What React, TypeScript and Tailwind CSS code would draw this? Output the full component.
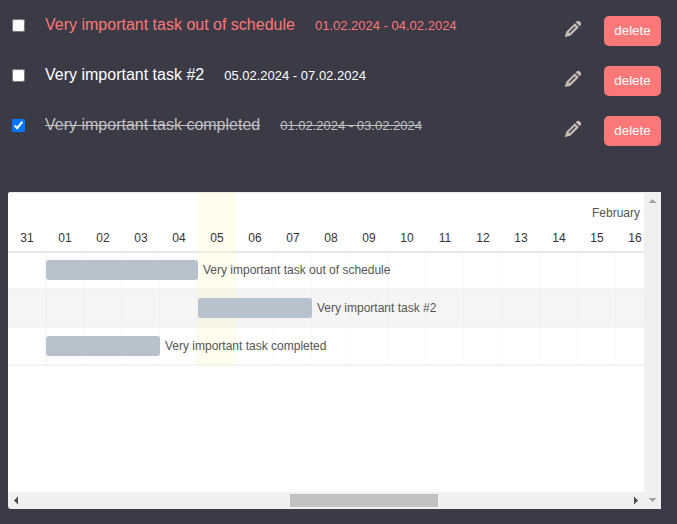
type Task = {
  title: string;
  dates: string;
  tone: string;
  done: boolean;
  start: number;
  days: number;
};

const tasks: Task[] = [
  { title: 'Very important task out of schedule', dates: '01.02.2024 - 04.02.2024', tone: 'text-[#fa7878]', done: false, start: 1, days: 4 },
  { title: 'Very important task #2', dates: '05.02.2024 - 07.02.2024', tone: 'text-white', done: false, start: 5, days: 3 },
  { title: 'Very important task completed', dates: '01.02.2024 - 03.02.2024', tone: 'text-[#c0c0c0] line-through', done: true, start: 1, days: 3 },
];

const days = ['31', '01', '02', '03', '04', '05', '06', '07', '08', '09', '10', '11', '12', '13', '14', '15', '16'];
const DAY = 38;

function Pencil() {
  return (
    <svg width="18" height="18" viewBox="0 0 18 18" fill="none">
      <path d="M0.8 17.1 L2.3 11.7 L10.8 3.2 L14.8 7.2 L6.3 15.7 Z" fill="#c8bdb4" />
      <path d="M5.2 12.8 L11.2 6.8" stroke="#3b3a47" strokeWidth="1.4" />
      <path d="M11.7 2.3 L12.9 1.3 Q14.3 0.2 15.7 1.4 L16.6 2.3 Q17.8 3.7 16.7 5.1 L15.7 6.3 Z" fill="#c8bdb4" />
    </svg>
  );
}

function TaskRow({ task }: { task: Task }) {
  return (
    <div className="flex h-[50px] items-start">
      <input type="checkbox" defaultChecked={task.done} className="mt-[9px] ml-1 size-[13px] shrink-0" />
      <div className={`ml-5 flex items-baseline gap-5 whitespace-nowrap ${task.tone}`}>
        <span className="pt-[3px] text-[16px] leading-6">{task.title}</span>
        <span className="text-[13px] leading-6">{task.dates}</span>
      </div>
      <button className="mt-[10px] ml-auto"><Pencil /></button>
      <button className="mt-[6px] ml-[22px] h-[30px] w-[57px] rounded-[5px] bg-[#fa7878] text-[13.333px] text-white">delete</button>
    </div>
  );
}

function Gantt() {
  return (
    <svg width="636" height="300" className="block" fontFamily="'Liberation Sans', Arial, sans-serif" fontSize="12">
      <rect width="636" height="300" fill="#fff" />
      <rect width="636" height="1" fill="#ececec" />
      <rect y="97" width="636" height="38" fill="#f5f5f5" />
      {[97, 135, 173].map((y) => (
        <rect key={y} y={y - 1} width="636" height="2" fill="#f3f4f4" />
      ))}
      <rect y="59" width="636" height="2" fill="#e8e8e8" />
      {days.slice(1).map((d, i) => (
        <rect key={d} x={(i + 1) * DAY - 1} y="61" width={i === 0 ? 2 : 1} height="112" fill="#e0e0e0" fillOpacity="0.22" />
      ))}
      <rect x="190" width="38" height="173" fill="#fcf8c3" fillOpacity="0.28" />
      <text x="608" y="25" textAnchor="middle" fill="#555">February</text>
      {days.map((d, i) => (
        <text key={d} x={19 + i * DAY} y="50" textAnchor="middle" fill="#333">{d}</text>
      ))}
      {tasks.map((t, i) => (
        <g key={t.title}>
          <rect x={t.start * DAY} y={68 + i * DAY} width={t.days * DAY} height="20" rx="3" fill="#b8c2cc" />
          <text x={(t.start + t.days) * DAY + 5} y={82 + i * DAY} fill="#555">{t.title}</text>
        </g>
      ))}
    </svg>
  );
}

export default function App() {
  return (
    <main className="h-[524px] w-[677px] overflow-hidden bg-[#3b3a47] px-2 pt-[10px] font-['Liberation_Sans',Arial,sans-serif]">
      <section className="h-[182px] w-[653px]">
        {tasks.map((t) => <TaskRow key={t.title} task={t} />)}
      </section>
      <section className="flex h-[317px] w-[653px] overflow-hidden rounded-l-[3px] bg-[#f0f0f0]">
        <div className="w-[636px]">
          <Gantt />
          <div className="flex h-[17px] items-center">
            <svg width="17" height="17" shapeRendering="crispEdges"><path d="M10 5 V12 L6 8.5 Z" fill="#505050" /></svg>
            <div className="ml-[265px] h-[13px] w-[148px] bg-[#c1c1c1]" />
            <svg className="ml-auto" width="17" height="17" shapeRendering="crispEdges"><path d="M7 5 V12 L11 8.5 Z" fill="#505050" /></svg>
          </div>
        </div>
        <div className="flex w-[17px] flex-col justify-between">
          <svg width="17" height="17" shapeRendering="crispEdges"><path d="M5 11 H12 L8.5 7 Z" fill="#a3a3a3" /></svg>
          <svg width="17" height="17" shapeRendering="crispEdges"><path d="M5 6 H12 L8.5 10 Z" fill="#a3a3a3" /></svg>
        </div>
      </section>
    </main>
  );
}
